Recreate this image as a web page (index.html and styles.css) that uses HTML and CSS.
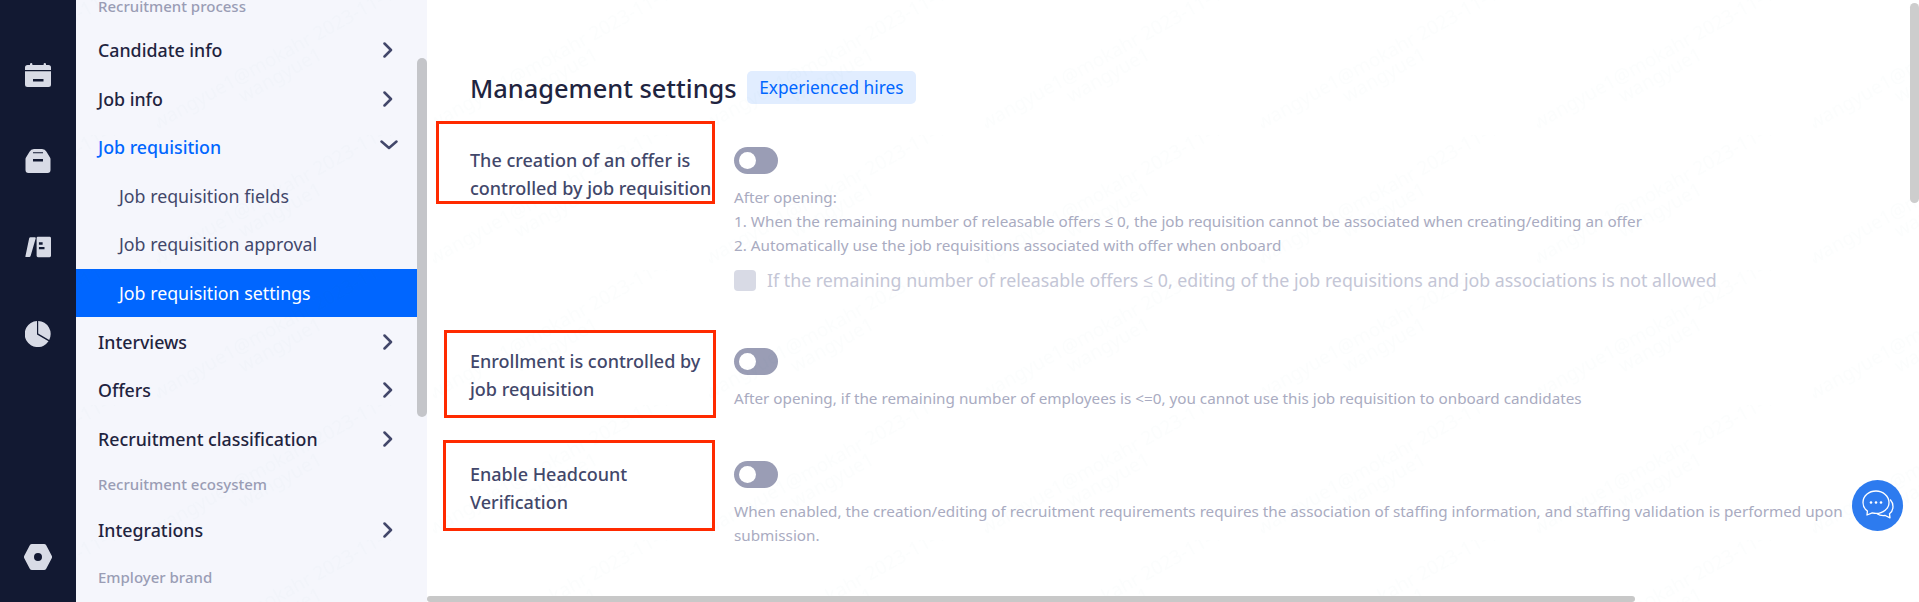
FILE: index.html
```html
<!DOCTYPE html>
<html lang="en">
<head>
<meta charset="utf-8">
<title>Management settings</title>
<link rel="stylesheet" href="styles.css">
</head>
<body>
<div class="app">
  <nav class="rail">
    <div class="rail-top">
      <svg class="rail-icon" viewBox="0 0 26 24"><path d="M5 1.200a1.200 1.200 0 0 1 2.400 0V2h11.200v-.8a1.200 1.200 0 0 1 2.400 0V2h2.500A2.500 2.500 0 0 1 26 4.500V7H0V4.500A2.500 2.500 0 0 1 2.500 2H5zM0 8.300h26V21.500a2.500 2.500 0 0 1-2.500 2.500h-21A2.500 2.500 0 0 1 0 21.500zM8 16v2.500h10.500V16z" fill-rule="evenodd"/></svg>
      <svg class="rail-icon" viewBox="0 0 26 24"><path d="M9 0h8a5 5 0 0 1 4.500 2.800L24.700 8a3 3 0 0 1 .8 2v11a3 3 0 0 1-3 3h-19a3 3 0 0 1-3-3V10a3 3 0 0 1 .8-2l3.200-5.200A5 5 0 0 1 9 0zM8 3.200v1h10v-1zM8 10v2.500h10V10z" fill-rule="evenodd"/></svg>
      <svg class="rail-icon" viewBox="0 0 28 24"><path d="M6 1.500h4.500a1 1 0 0 1 1 1.300L6 21.800a1.500 1.500 0 0 1-1.400 1.100H1.500a1 1 0 0 1-1-1.300L4.500 2.500a1.500 1.500 0 0 1 1.500-1zM13.500 1h13a1.500 1.500 0 0 1 1.500 1.500v19a1.500 1.500 0 0 1-1.500 1.500H14a1.500 1.500 0 0 1-1.500-1.500v-19A1.500 1.500 0 0 1 13.500 1zM15 7v2.500h4V7zM15 12v2.500h6V12z" fill-rule="evenodd"/></svg>
      <svg class="rail-icon rail-pie" viewBox="0 0 26 26"><path d="M12 .1V13.500l11.500 6.800A13 13 0 1 1 12 .1zM13.200 0A13 13 0 0 1 24.200 19l-11-6.500z"/></svg>
    </div>
    <svg class="rail-icon rail-gear" viewBox="0 0 28 26"><path d="M8 0h12a2.500 2.500 0 0 1 2.200 1.300l5.400 10.200a3 3 0 0 1 0 3L22.200 24.700A2.500 2.500 0 0 1 20 26H8a2.500 2.500 0 0 1-2.200-1.300L.4 14.500a3 3 0 0 1 0-3L5.800 1.300A2.500 2.500 0 0 1 8 0zM14 9a4 4 0 1 0 0 8 4 4 0 0 0 0-8z" fill-rule="evenodd"/></svg>
  </nav>

  <aside class="side">
    <ul class="menu">
      <li class="group group-first">Recruitment process</li>
      <li class="item">Candidate info<svg class="chev" viewBox="0 0 10 16"><path d="M1.500 1.500 8 8l-6.500 6.500"/></svg></li>
      <li class="item">Job info<svg class="chev" viewBox="0 0 10 16"><path d="M1.500 1.500 8 8l-6.500 6.500"/></svg></li>
      <li class="item item-open">Job requisition<svg class="chev-down" viewBox="0 0 18 10"><path d="M1.500 1.500 9 8l7.500-6.500"/></svg></li>
      <li class="item sub">Job requisition fields</li>
      <li class="item sub">Job requisition approval</li>
      <li class="item sub active">Job requisition settings</li>
      <li class="item">Interviews<svg class="chev" viewBox="0 0 10 16"><path d="M1.500 1.500 8 8l-6.500 6.500"/></svg></li>
      <li class="item">Offers<svg class="chev" viewBox="0 0 10 16"><path d="M1.500 1.500 8 8l-6.500 6.500"/></svg></li>
      <li class="item">Recruitment classification<svg class="chev" viewBox="0 0 10 16"><path d="M1.500 1.500 8 8l-6.500 6.500"/></svg></li>
      <li class="group">Recruitment ecosystem</li>
      <li class="item">Integrations<svg class="chev" viewBox="0 0 10 16"><path d="M1.500 1.500 8 8l-6.500 6.500"/></svg></li>
      <li class="group group-last">Employer brand</li>
    </ul>
    <div class="side-thumb"></div>
  </aside>

  <main class="main">
    <header class="head">
      <h1 class="title">Management settings</h1>
      <span class="tag">Experienced hires</span>
    </header>

    <section class="row row-first">
      <div class="label">The creation of an offer is controlled by job requisition</div>
      <div class="body">
        <span class="toggle"></span>
        <p class="desc">After opening:<br>1. When the remaining number of releasable offers ≤ 0, the job requisition cannot be associated when creating/editing an offer<br>2. Automatically use the job requisitions associated with offer when onboard</p>
        <div class="check"><span class="box"></span><span class="check-text">If the remaining number of releasable offers ≤ 0, editing of the job requisitions and job associations is not allowed</span></div>
      </div>
    </section>

    <section class="row">
      <div class="label">Enrollment is controlled by job requisition</div>
      <div class="body">
        <span class="toggle"></span>
        <p class="desc">After opening, if the remaining number of employees is &lt;=0, you cannot use this job requisition to onboard candidates</p>
      </div>
    </section>

    <section class="row">
      <div class="label">Enable Headcount Verification</div>
      <div class="body">
        <span class="toggle"></span>
        <p class="desc">When enabled, the creation/editing of recruitment requirements requires the association of staffing information, and staffing validation is performed upon submission.</p>
      </div>
    </section>
  </main>
</div>

<svg class="watermark" width="1843" height="602" aria-hidden="true">
  <defs>
    <pattern id="wm" x="81" y="0" width="276" height="135" patternUnits="userSpaceOnUse">
      <g fill="#1f2a60" class="wm-text">
        <text transform="translate(0 130) rotate(-29)">wangyue1@mokahr 2023-11-1</text>
        <text transform="translate(86 103) rotate(-29)">wangyue1</text>
      </g>
    </pattern>
  </defs>
  <rect width="1843" height="602" fill="url(#wm)"/>
</svg>

<div class="mark mark-a"></div>
<div class="mark mark-b"></div>
<div class="mark mark-c"></div>
<div class="thumb-v"></div>
<div class="thumb-h"></div>
<div class="chat">
  <svg viewBox="0 0 34 34" width="34" height="34"><g fill="none" stroke="#fff" stroke-width="1.300" stroke-linejoin="round"><path d="M15 2C7.800 2 2 7 2 13.500c0 3.500 1.700 6.500 4.400 8.600l-.4 3.900 5.200-2.100c1.200.3 2.500.5 3.800.5 7.200 0 13-5 13-11S22.200 2 15 2z"/><path d="M29.200 10.500c1.800 2 2.800 4.400 2.800 7 0 3-1.300 5.600-3.500 7.300l.5 4-4.800-2.300c-3 .4-6-.2-8.200-1.700"/></g><g fill="#fff"><circle cx="10" cy="13.500" r="1.300"/><circle cx="15" cy="13.500" r="1.300"/><circle cx="20" cy="13.500" r="1.300"/></g></svg>
</div>
</body>
</html>
```
FILE: styles.css
```css
* { box-sizing: border-box; }
html, body { margin: 0; height: 100%; overflow: hidden; background: #fff; }
body { font-family: "Noto Sans", "Open Sans", sans-serif; color: #42476a; }

.app { display: flex; height: 602px; overflow: hidden; }

.rail { flex: 0 0 76px; background: #121932; display: flex; flex-direction: column; align-items: center; padding: 63px 0 32px; justify-content: space-between; }
.rail-top { display: flex; flex-direction: column; align-items: center; gap: 62px; }
.rail-icon { display: block; width: 26px; height: 24px; fill: #d8dbe6; }
.rail-pie { height: 26px; }
.rail-gear { width: 28px; height: 26px; }

.side { position: relative; flex: 0 0 351px; background: #f5f6fc; overflow: hidden; }
.menu { list-style: none; margin: -14.3px 10px 0 0; padding: 0; }
.item { height: 48.6px; display: flex; align-items: center; justify-content: space-between; padding: 0 24px 0 22px; font-size: 17.8px; font-weight: 500; color: #1f2440; }
.group { height: 42.4px; display: flex; align-items: center; padding-left: 22px; font-size: 15px; font-weight: 500; color: #9a9db5; }
.group-first { height: 40px; }
.group-last { height: 46px; }
.item-open { color: #0066ff; padding-right: 19px; }
.sub { padding-left: 43px; font-weight: 400; color: #42476a; }
.active { background: #0066ff; color: #fff; }
.chev { width: 10px; height: 16px; fill: none; stroke: #42476a; stroke-width: 2.500; stroke-linecap: round; stroke-linejoin: round; }
.chev-down { width: 18px; height: 10px; fill: none; stroke: #42476a; stroke-width: 2.500; stroke-linecap: round; stroke-linejoin: round; margin-top: -4px; }
.side-thumb { position: absolute; right: 0; top: 58px; width: 10px; height: 359px; background: #c4c5c9; border-radius: 5px; }

.main { flex: 1; padding: 71px 0 0 43px; min-width: 0; }
.head { display: flex; align-items: center; gap: 10px; height: 33px; }
.title { margin: 0; font-size: 25.4px; font-weight: 500; color: #1f2440; white-space: nowrap; }
.tag { height: 33px; padding: 0 12.500px; display: flex; align-items: center; background: #e1edff; border-radius: 5px; color: #0066ff; font-size: 17.3px; }

.row { display: flex; margin-bottom: 50px; }
.row-first { margin-top: 43px; }
.label { flex: 0 0 245px; margin: -1px 19px 0 0; font-size: 18px; line-height: 28px; font-weight: 500; color: #42476a; }
.body { flex: 1; min-width: 0; padding-right: 70px; }
.toggle { display: block; position: relative; width: 44px; height: 27px; border-radius: 14px; background: #9a9db5; }
.toggle::after { content: ""; position: absolute; left: 5px; top: 5px; width: 17px; height: 17px; border-radius: 50%; background: #fff; }
.desc { margin: 11px 0 0; padding-bottom: 1px; font-size: 15.25px; line-height: 24px; color: #a9abc1; }
.check { display: flex; align-items: center; margin: 10px 0 6px; height: 24px; gap: 11px; }
.box { width: 22px; height: 21px; border-radius: 4px; background: #d8dae5; flex: none; }
.check-text { font-size: 17.8px; color: #c4c6d6; white-space: nowrap; }

.watermark { position: absolute; left: 76px; top: 0; pointer-events: none; }
.wm-text { font-size: 19px; fill-opacity: 0.012; }

.thumb-v { position: absolute; right: 0; top: 3px; width: 9px; height: 200px; border-radius: 5px; background: #cdcdcd; }
.thumb-h { position: absolute; left: 427px; bottom: 0; width: 1208px; height: 6px; border-radius: 3px; background: #c8c8c8; }
.chat { position: absolute; left: 1852px; top: 480px; width: 51px; height: 51px; border-radius: 50%; background: #2d7bef; display: flex; align-items: center; justify-content: center; }

.mark { position: absolute; border: 3px solid #ff2a00; pointer-events: none; }
.mark-a { left: 436px; top: 121px; width: 279px; height: 83px; }
.mark-b { left: 444px; top: 330px; width: 272px; height: 88px; }
.mark-c { left: 443px; top: 440px; width: 272px; height: 91px; }
```
